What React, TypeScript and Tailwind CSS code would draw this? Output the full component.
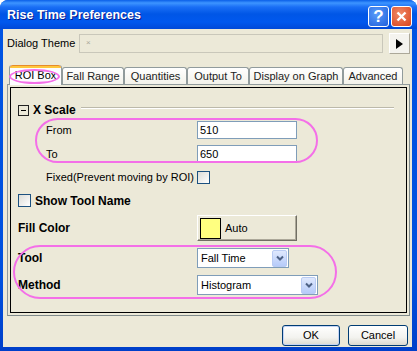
import { ReactNode } from "react";

function Checkbox() {
  return (
    <div className="h-[13px] w-[13px] border border-[#1c5180] bg-[linear-gradient(135deg,#dcdcd7,#ffffff)]" />
  );
}

function Combo({ value, width }: { value: string; width: string }) {
  return (
    <div className={`flex h-[20px] ${width} items-center border border-[#7f9db9] bg-white pl-[3px] pr-[1px]`}>
      <span className="flex-1">{value}</span>
      <div className="flex h-[17px] w-[15px] items-center justify-center rounded-[2px] border border-[#b9cbf3] bg-[linear-gradient(to_bottom,#dfe8fd,#b6cbf9)]">
        <svg width="8" height="6" viewBox="0 0 8 6">
          <path d="M1 1.5 L4 4.5 L7 1.5" stroke="#4d6185" strokeWidth="2" fill="none" />
        </svg>
      </div>
    </div>
  );
}

function Tab({ label, width, active }: { label: string; width: string; active?: boolean }) {
  if (active) {
    return (
      <div
        className={`relative z-10 -mb-px flex h-[20px] ${width} flex-col rounded-t-[3px] border-x border-[#919b9c] bg-[#fcfcfe]`}
      >
        <div className="h-[3px] rounded-t-[3px] border-t border-[#e68b2c] bg-[#ffc73c]" />
        <div className="flex flex-1 items-center justify-center pb-[2px]">{label}</div>
      </div>
    );
  }
  return (
    <div
      className={`flex h-[17px] ${width} items-center justify-center rounded-t-[3px] border-x border-t border-[#919b9c] bg-[linear-gradient(to_bottom,#ffffff,#f3f2ea)] text-[#222]`}
    >
      {label}
    </div>
  );
}

function XpButton({ children, width, focused }: { children: ReactNode; width: string; focused?: boolean }) {
  return (
    <div
      className={`flex h-[21px] ${width} items-center justify-center rounded-[3px] border border-[#003c74] bg-[linear-gradient(to_bottom,#ffffff,#f3f3ef_60%,#dcdad0)] ${
        focused ? "shadow-[inset_0_0_0_1px_#c4d4f5]" : ""
      }`}
    >
      {children}
    </div>
  );
}

export default function App() {
  return (
    <div className="relative h-[351px] w-[417px] bg-white font-['Liberation_Sans',Arial,sans-serif] text-[11px] leading-none text-black">
      <div className="flex h-full flex-col rounded-t-[8px] bg-[linear-gradient(to_bottom,#0054e3,#0050df_80%,#003fc9)]">
        {/* title bar */}
        <div className="flex h-[29px] items-center rounded-t-[8px] bg-[linear-gradient(to_bottom,#0a5fe8_0px,#3d95ff_3px,#1a6ff5_7px,#0056e6_14px,#0058ee_22px,#0049d8_29px)] pl-[7px] pr-[5px]">
          <span className="flex-1 pt-[2px] text-[12.5px] font-bold text-white [text-shadow:1px_1px_#0a1a8a]">
            Rise Time Preferences
          </span>
          <div className="mt-[3px] flex h-[21px] w-[21px] items-center justify-center rounded-[3px] border border-white bg-[radial-gradient(circle_at_40%_35%,#5b9dfa,#1f5fdc)] text-[17px] font-bold text-white">
            ?
          </div>
          <div className="ml-[2px] mt-[3px] flex h-[21px] w-[21px] items-center justify-center rounded-[3px] border border-white bg-[radial-gradient(circle_at_40%_35%,#f08a68,#d9431c)]">
            <svg width="11" height="11" viewBox="0 0 11 11">
              <path d="M1.5 1.5 L9.5 9.5 M9.5 1.5 L1.5 9.5" stroke="white" strokeWidth="2.4" />
            </svg>
          </div>
        </div>

        {/* body */}
        <div className="mb-[4px] ml-[3px] mr-[5px] flex flex-1 flex-col bg-[#ece9d8]">
          {/* dialog theme */}
          <div className="mt-[4px] flex h-[21px] items-center pl-[4px]">
            <span className="w-[72px]">Dialog Theme</span>
            <div className="flex h-[19px] w-[304px] items-start border border-[#c9c7ba] bg-[#ece9d8] pl-[6px] pt-[4px] text-[8px] text-[#aaa79a]">
              ×
            </div>
            <div className="ml-[6px] flex h-[21px] w-[21px] items-center justify-center border border-t-white border-l-white border-b-[#aca899] border-r-[#aca899] bg-[#f4f3ee]">
              <svg width="7" height="10" viewBox="0 0 7 10">
                <path d="M0 0 L7 5 L0 10 Z" fill="black" />
              </svg>
            </div>
          </div>

          {/* tabs */}
          <div className="mt-[11px] flex h-[19px] items-end pl-[6px]">
            <Tab label="ROI Box" width="w-[53px]" active />
            <Tab label="Fall Range" width="w-[62px]" />
            <Tab label="Quantities" width="w-[63px]" />
            <Tab label="Output To" width="w-[62px]" />
            <Tab label="Display on Graph" width="w-[94px]" />
            <Tab label="Advanced" width="w-[60px]" />
          </div>

          {/* tab page */}
          <div className="ml-[4px] h-[232px] w-[403px] border border-[#919b9c] border-r-[#7f8a8b] border-b-[#7f8a8b] p-[2px]">
            <div className="flex h-full flex-col border border-black">
              <div className="mt-[15px] flex h-[14px] items-center pl-[7px]">
                <div className="flex h-[11px] w-[11px] items-center justify-center border border-[#222]">
                  <div className="h-px w-[5px] bg-black" />
                </div>
                <span className="ml-[4px] text-[12px] font-bold">X Scale</span>
                <div className="ml-[5px] mr-[12px] flex-1 -translate-y-[2px] border-t border-b border-t-[#bcb9aa] border-b-white" />
              </div>

              <div className="mt-[4px] flex h-[18px] items-center pl-[35px]">
                <span className="w-[151px]">From</span>
                <div className="flex h-[18px] w-[100px] items-center border border-[#7f9db9] bg-white pl-[2px]">510</div>
              </div>
              <div className="mt-[6px] flex h-[18px] items-center pl-[35px]">
                <span className="w-[151px]">To</span>
                <div className="flex h-[18px] w-[100px] items-center border border-[#7f9db9] bg-white pl-[2px]">650</div>
              </div>
              <div className="mt-[8px] flex h-[13px] items-center pl-[35px]">
                <span className="w-[151px]">Fixed(Prevent moving by ROI)</span>
                <Checkbox />
              </div>

              <div className="mt-[10px] flex h-[13px] items-center pl-[7px]">
                <Checkbox />
                <span className="ml-[4px] text-[12px] font-bold">Show Tool Name</span>
              </div>

              <div className="mt-[8px] flex h-[26px] items-center pl-[7px]">
                <span className="w-[179px] text-[12px] font-bold">Fill Color</span>
                <div className="flex h-[26px] w-[100px] items-center border border-t-white border-l-white border-b-[#716f64] border-r-[#716f64] bg-[#ece9d8] pl-[2px] shadow-[inset_-1px_-1px_#aca899]">
                  <div className="h-[21px] w-[21px] border border-black bg-[#ffff80]" />
                  <span className="ml-[4px]">Auto</span>
                </div>
              </div>

              <div className="mt-[7px] flex h-[20px] items-center pl-[7px]">
                <span className="w-[179px] text-[12px] font-bold">Tool</span>
                <Combo value="Fall Time" width="w-[92px]" />
              </div>
              <div className="mt-[7px] flex h-[20px] items-center pl-[7px]">
                <span className="w-[179px] text-[12px] font-bold">Method</span>
                <Combo value="Histogram" width="w-[121px]" />
              </div>
            </div>
          </div>

          {/* buttons */}
          <div className="mt-[9px] flex justify-end gap-[8px] pr-[4px]">
            <XpButton width="w-[58px]" focused>
              OK
            </XpButton>
            <XpButton width="w-[60px]">Cancel</XpButton>
          </div>
        </div>
      </div>

      {/* annotation marks */}
      <div className="pointer-events-none absolute left-[9px] top-[69px] z-20 h-[15px] w-[51px] rounded-[50%] border-2 border-[#f46fe8]" />
      <div className="pointer-events-none absolute left-[35px] top-[118px] z-20 h-[45px] w-[283px] rounded-full border-2 border-[#f46fe8]" />
      <div className="pointer-events-none absolute left-[13px] top-[245px] z-20 h-[54px] w-[324px] rounded-full border-2 border-[#f46fe8]" />
    </div>
  );
}
